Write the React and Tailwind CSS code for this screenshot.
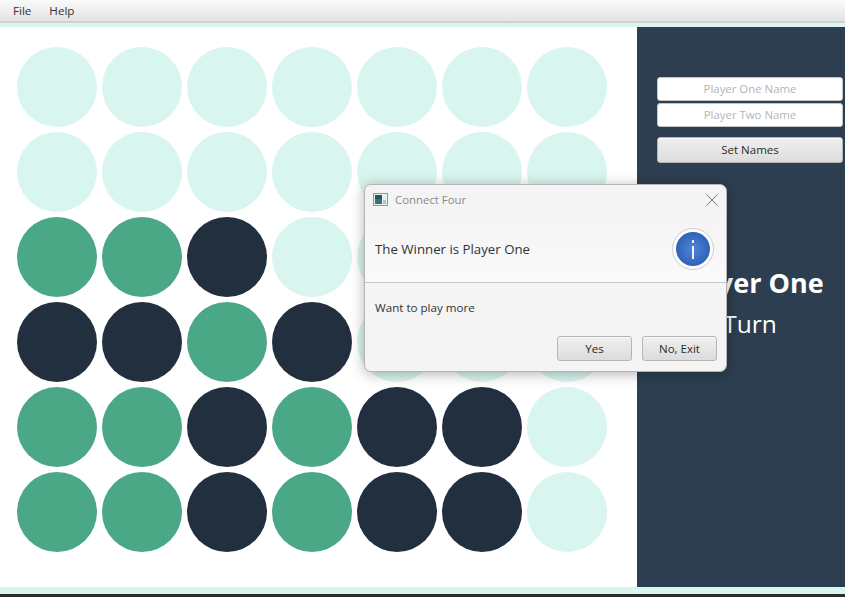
const G = "bg-[#4ba886]", D = "bg-[#222f3e]", M = "bg-[#d9f5ef]";
const board = [
  [M, M, M, M, M, M, M],
  [M, M, M, M, M, M, M],
  [G, G, D, M, M, M, M],
  [D, D, G, D, M, M, M],
  [G, G, D, G, D, D, M],
  [G, G, D, G, D, D, M],
];
const font = { fontFamily: '"Open Sans", "Noto Sans", sans-serif' };

function Btn({ children, className }) {
  return (
    <button className={"flex items-center justify-center rounded-[3px] border border-[#b5b5b5] bg-gradient-to-b from-[#f0f0f0] to-[#dcdcdc] text-[11.5px] text-[#2a2a2a] shadow-[inset_0_1px_0_#fafafa] " + className}>
      {children}
    </button>
  );
}

function Field({ children }) {
  return (
    <div className="flex h-[24px] items-center justify-center rounded-[3px] border border-[#c4c4c4] bg-white text-[11.4px] text-[#b4b4b4]">
      {children}
    </div>
  );
}

export default function App() {
  return (
    <div style={font} className="relative flex h-[597px] w-[845px] flex-col overflow-hidden bg-[#d9f5ef]">
      <div className="flex h-[23px] items-center gap-[18px] border-b-2 border-[#cbd2cf] bg-gradient-to-b from-[#fafafa] to-[#e3e3e3] pl-[13px] text-[11.6px] text-[#333]">
        <span>File</span>
        <span>Help</span>
      </div>
      <div className="mt-[4px] flex h-[560px]">
        <div className="w-[637px] bg-white pl-[17px] pt-[20px]">
          <div className="grid grid-cols-[repeat(7,80px)] gap-[5px]">
            {board.flat().map((c, i) => (
              <div key={i} className={"h-[80px] w-[80px] rounded-full " + c} />
            ))}
          </div>
        </div>
        <div className="flex w-[208px] flex-col bg-[#2c3e50] pl-[20px] pr-[2px] pt-[50px]">
          <div className="flex flex-col gap-[2px]">
            <Field>Player One Name</Field>
            <Field>Player Two Name</Field>
          </div>
          <Btn className="mt-[10px] h-[26px] w-full">Set Names</Btn>
          <div className="mt-[103px] text-center text-[27px] font-bold leading-[34px] text-white">Player One</div>
          <div className="mt-[7px] text-center text-[24.5px] leading-[34px] text-white">Turn</div>
        </div>
      </div>
      <div className="mt-[7px] h-[3px] bg-[#2b2b2b]" />

      <div className="absolute left-[364px] top-[184px] flex h-[188px] w-[363px] flex-col rounded-[7px] border border-[#b4b4b4] bg-[#f4f4f4] shadow-[0_2px_14px_rgba(0,0,0,0.3)]">
        <div className="flex h-[29px] items-center px-[8px] text-[11.4px] text-[#8a8a8a]">
          <svg width="15" height="13" viewBox="0 0 15 13" className="mr-[7px]">
            <rect x="0.5" y="0.5" width="14" height="12" fill="#e8efee" stroke="#8d9a97" />
            <rect x="2" y="2" width="7" height="9" fill="#2f7a6c" />
            <rect x="2" y="2" width="7" height="4" fill="#2d4f6a" />
            <rect x="10" y="7" width="3" height="4" fill="#9fd0c2" />
          </svg>
          <span>Connect Four</span>
          <svg width="12" height="12" viewBox="0 0 12 12" className="ml-auto">
            <path d="M0.5 0.5 L11.5 11.5 M11.5 0.5 L0.5 11.5" stroke="#777" strokeWidth="1" fill="none" />
          </svg>
        </div>
        <div className="flex h-[69px] items-center justify-between border-b border-[#c8c8c8] bg-gradient-to-b from-[#f4f4f4] to-[#fafafa] pl-[10px] pr-[12px] pt-[2px] text-[13.25px] text-[#333]">
          <span className="mt-[2px]">The Winner is Player One</span>
          <svg width="42" height="42" viewBox="0 0 42 42">
            <defs>
              <radialGradient id="blue" cx="50%" cy="50%" r="50%">
                <stop offset="0%" stopColor="#4f86d8" />
                <stop offset="100%" stopColor="#2f62b8" />
              </radialGradient>
            </defs>
            <circle cx="21" cy="21" r="20.5" fill="#fdfdfd" stroke="#cfcfcf" />
            <circle cx="21" cy="21" r="17" fill="url(#blue)" />
            <rect x="20" y="18" width="2" height="13" fill="#eef3fb" />
            <rect x="20" y="12" width="2" height="3" fill="#eef3fb" />
          </svg>
        </div>
        <div className="pl-[10px] pt-[16px] text-[11.6px] leading-[17px] text-[#333]">Want to play more</div>
        <div className="mt-[20px] flex justify-end gap-[10px] pr-[9px]">
          <Btn className="h-[25px] w-[75px]">Yes</Btn>
          <Btn className="h-[25px] w-[75px]">No, Exit</Btn>
        </div>
      </div>
    </div>
  );
}
